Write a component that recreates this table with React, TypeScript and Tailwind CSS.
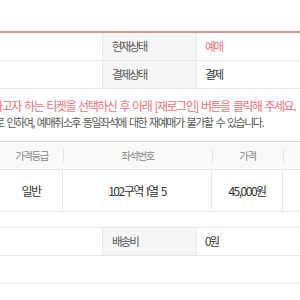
import React from "react";

const font = {
  fontFamily: '"Noto Sans CJK KR", "Noto Sans", sans-serif',
};

function InfoRow({
  label,
  value,
  valueClass,
}: {
  label: string;
  value: string;
  valueClass: string;
}) {
  return (
    <div className="grid grid-cols-[102px_95px_1fr] h-[28px] border-b border-[#e6e6e6]">
      <div />
      <div className="bg-[#f6f6f6] border-l border-r border-[#e9e9e9] flex items-center pl-[9px] text-[#555] text-[11.5px] tracking-[-2px]">
        {label}
      </div>
      <div className={`flex items-center pl-[8px] text-[11.5px] tracking-[-2px] ${valueClass}`}>
        {value}
      </div>
    </div>
  );
}

export default function App() {
  return (
    <div className="w-[300px] h-[300px] overflow-hidden bg-white" style={font}>
      <div className="h-[31px]" />
      <div className="border-t-2 border-[#e98a90]">
        <InfoRow label="현재상태" value="예매" valueClass="text-[#e8727a]" />
        <InfoRow label="결제상태" value="결제" valueClass="text-[#333]" />
      </div>

      <div className="h-[52px] flex flex-col pt-[8px]">
        <div className="flex justify-end pr-[5px] whitespace-nowrap h-[17px] items-center text-[12px] tracking-[-1.5px] [word-spacing:2px] text-[#e8727a]">
          <span>
            취소하고자 하는 티켓을 선택하신 후 아래 [재로그인] 버튼을 클릭해 주세요.
          </span>
        </div>
        <div className="flex justify-end pr-[37px] whitespace-nowrap h-[17px] items-center text-[11px] tracking-[-1.5px] [word-spacing:2px] text-[#555]">
          <span>
            시스템 처리로 인하여, 예매취소후 동일좌석에 대한 재예매가 불가할 수 있습니다.
          </span>
        </div>
      </div>

      <div className="border-t border-[#d6d6d6]">
        <div className="grid grid-cols-[63px_149px_71px_1fr] h-[28px] bg-[#f9f9f9] border-b border-[#e6e6e6] text-[10.5px] tracking-[-1.5px] text-[#888]">
          <div className="flex items-center justify-center">가격등급</div>
          <div className="flex items-center justify-center relative">
            <span className="absolute left-0 top-[7px] h-[13px] w-px bg-[#e2e2e2]" />
            좌석번호
          </div>
          <div className="flex items-center justify-center relative">
            <span className="absolute left-0 top-[7px] h-[13px] w-px bg-[#e2e2e2]" />
            가격
          </div>
          <div className="relative">
            <span className="absolute left-0 top-[7px] h-[13px] w-px bg-[#e2e2e2]" />
          </div>
        </div>
        <div className="grid grid-cols-[63px_149px_71px_1fr] h-[42px] border-b border-[#e6e6e6] text-[12px] tracking-[-1.5px] text-[#333]">
          <div className="flex items-center justify-center border-r border-[#e6e6e6]">일반</div>
          <div className="flex items-center justify-center border-r border-[#e6e6e6] [word-spacing:2px]">102구역 I열 5</div>
          <div className="flex items-center justify-center border-r border-[#e6e6e6]">45,000원</div>
          <div />
        </div>
      </div>

      <div className="h-[15px]" />
      <div className="border-t border-[#e6e6e6]">
        <InfoRow label="배송비" value="0원" valueClass="text-[#333]" />
      </div>
      <div className="h-[27px]" />
      <div className="border-t border-[#e6e6e6]" />
    </div>
  );
}
